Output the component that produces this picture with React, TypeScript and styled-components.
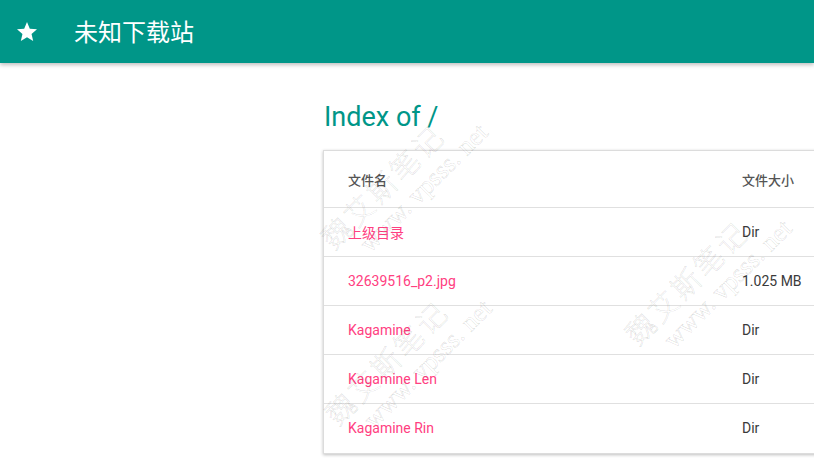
import React from 'react';
import styled, { createGlobalStyle } from 'styled-components';

interface Entry {
	name: string;
	size: string;
}

const entries: Entry[] = [
	{ name: '上级目录', size: 'Dir' },
	{ name: '32639516_p2.jpg', size: '1.025 MB' },
	{ name: 'Kagamine', size: 'Dir' },
	{ name: 'Kagamine Len', size: 'Dir' },
	{ name: 'Kagamine Rin', size: 'Dir' },
];

// watermark centres, as they sit over the screenshot
const marks = [
	{ x: 402, y: 186 },
	{ x: 706, y: 282 },
	{ x: 406, y: 362 },
];

const GlobalStyle = createGlobalStyle`
	html, body {
		margin: 0;
		padding: 0;
		background: #fff;
		overflow: hidden;
		font-family: Roboto, "Noto Sans CJK SC", sans-serif;
	}
`;

const StarIcon = () => (
	<svg width="24" height="24" viewBox="0 0 24 24" fill="#fff">
		<path d="M12 17.27L18.18 21l-1.64-7.03L22 9.24l-7.19-.61L12 2 9.19 8.63 2 9.24l5.46 4.73L5.82 21z" />
	</svg>
);

export default function App() {
	return (
		<Page>
			<GlobalStyle />
			<AppBar>
				<StarIcon />
				<Title>未知下载站</Title>
			</AppBar>
			<Main>
				<Heading>Index of /</Heading>
				<Card>
					<Table>
						<thead>
							<tr>
								<HeadCell>文件名</HeadCell>
								<HeadCell $size>文件大小</HeadCell>
							</tr>
						</thead>
						<tbody>
							{entries.map(e => (
								<Row key={e.name}>
									<Cell><FileLink href="#">{e.name}</FileLink></Cell>
									<Cell $size>{e.size}</Cell>
								</Row>
							))}
						</tbody>
					</Table>
				</Card>
			</Main>
			{marks.map((m, i) => (
				<Watermark key={i} style={{ left: m.x, top: m.y }}>
					<WatermarkInner>
						<WatermarkName>魏艾斯笔记</WatermarkName>
						<WatermarkUrl>www. vpsss. net</WatermarkUrl>
					</WatermarkInner>
				</Watermark>
			))}
		</Page>
	);
}

const Page = styled.div`
	position: relative;
	width: 814px;
	height: 462px;
	overflow: hidden;
`;

const AppBar = styled.header`
	height: 63px;
	background: #009688;
	display: flex;
	align-items: center;
	gap: 35px;
	padding: 0 0 0 15px;
	box-shadow: 0 2px 4px rgba(0, 0, 0, 0.25);
	position: relative;
	z-index: 1;
`;

const Title = styled.div`
	color: #fff;
	font-family: "Noto Sans CJK SC", sans-serif;
	font-size: 24px;
	line-height: 1;
	margin-top: -2px;
`;

const Main = styled.main`
	padding: 39px 0 0 323px;
`;

const Heading = styled.h1`
	margin: 0 0 18px 1px;
	color: #009688;
	font-family: Roboto, sans-serif;
	font-weight: 400;
	font-size: 27px;
	line-height: 30px;
`;

const Card = styled.div`
	width: 580px;
	background: #fff;
	border: 1px solid #dcdcdc;
	border-right: none;
	box-shadow: 0 1px 3px rgba(0, 0, 0, 0.25);
`;

const Table = styled.table`
	width: 100%;
	border-collapse: collapse;
	font-size: 13px;
`;

const HeadCell = styled.th<{ $size?: boolean }>`
	height: 56px;
	padding: 0 0 0 ${p => p.$size ? '0' : '24px'};
	width: ${p => p.$size ? '162px' : 'auto'};
	text-align: left;
	font-family: "Noto Sans CJK SC", sans-serif;
	font-size: 13px;
	font-weight: 500;
	color: #555;
	border-bottom: 1px solid #e0e0e0;
`;

const Row = styled.tr`
	height: 49px;
	border-bottom: 1px solid #e0e0e0;
	&:last-child {
		border-bottom: none;
	}
`;

const Cell = styled.td<{ $size?: boolean }>`
	padding: 0 0 0 ${p => p.$size ? '0' : '24px'};
	color: #3a3a3a;
	font-family: Roboto, "Noto Sans CJK SC", sans-serif;
	font-size: 14px;
	font-weight: 400;
`;

const FileLink = styled.a`
	color: #ff4081;
	text-decoration: none;
`;

const Watermark = styled.div`
	position: absolute;
	width: 0;
	height: 0;
	pointer-events: none;
	z-index: 2;
`;

const WatermarkInner = styled.div`
	position: absolute;
	left: 0;
	top: 0;
	transform: translate(-50%, -50%) rotate(-45deg);
	display: flex;
	flex-direction: column;
	align-items: center;
	gap: 4px;
	white-space: nowrap;
	color: transparent;
	-webkit-text-stroke: 0.5px rgba(0, 0, 0, 0.16);
`;

const WatermarkName = styled.div`
	font-family: "Noto Sans CJK SC", serif;
	font-weight: 300;
	font-size: 29px;
	letter-spacing: 3px;
	line-height: 30px;
	transform: translateX(-14px);
`;

const WatermarkUrl = styled.div`
	font-family: "Liberation Serif", serif;
	font-size: 26px;
	line-height: 26px;
	transform: translateX(14px);
`;
